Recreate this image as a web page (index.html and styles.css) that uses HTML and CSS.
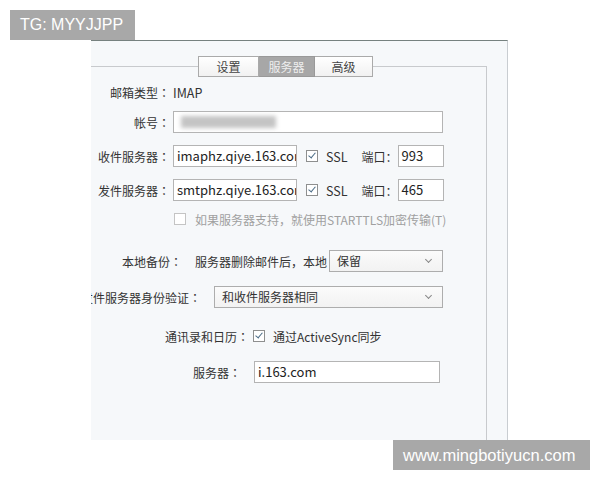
FILE: index.html
```html
<!DOCTYPE html>
<html lang="zh-CN">
<head>
    <meta charset="UTF-8">
    <title>服务器设置</title>
    <link rel="stylesheet" href="styles.css">
</head>
<body>
    <div class="mark mark-top">TG: MYYJJPP</div>

    <div class="panel">
        <div class="group">
            <div class="tabs">
                <div class="tab tab-1">设置</div>
                <div class="tab tab-2 active">服务器</div>
                <div class="tab tab-3">高级</div>
            </div>

            <div class="row r1">
                <div class="label w-a">邮箱类型<span class="p">：</span></div>
                <span class="plain">IMAP</span>
            </div>

            <div class="row r2">
                <div class="label w-a">帐号<span class="p">：</span></div>
                <div class="field f-account"><div class="blur"></div></div>
            </div>

            <div class="row r3">
                <div class="label w-a">收件服务器<span class="p">：</span></div>
                <div class="field f-host">imaphz.qiye.163.com</div>
                <span class="check on"></span>
                <span class="ssl">SSL</span>
                <span class="port-label">端口<span class="p">：</span></span>
                <div class="field f-port">993</div>
            </div>

            <div class="row r4">
                <div class="label w-a">发件服务器<span class="p">：</span></div>
                <div class="field f-host">smtphz.qiye.163.com</div>
                <span class="check on"></span>
                <span class="ssl">SSL</span>
                <span class="port-label">端口<span class="p">：</span></span>
                <div class="field f-port">465</div>
            </div>

            <div class="row r5">
                <span class="check off"></span>
                <span class="muted">如果服务器支持<span class="p">，</span>就使用STARTTLS加密传输(T)</span>
            </div>

            <div class="row r6">
                <div class="label w-b">本地备份<span class="p">：</span></div>
                <span class="note">服务器删除邮件后<span class="p">，</span>本地</span>
                <div class="select s-keep">保留<span class="chev"></span></div>
            </div>

            <div class="row r7">
                <div class="label w-c">发件服务器身份验证<span class="p">：</span></div>
                <div class="select s-auth">和收件服务器相同<span class="chev"></span></div>
            </div>

            <div class="row r8">
                <div class="label w-d">通讯录和日历<span class="p">：</span></div>
                <span class="check on"></span>
                <span class="sync">通过ActiveSync同步</span>
            </div>

            <div class="row r9">
                <div class="label w-e">服务器<span class="p">：</span></div>
                <div class="field f-sync">i.163.com</div>
            </div>
        </div>
    </div>

    <div class="mark mark-bottom">www.mingbotiyucn.com</div>
</body>
</html>
```

FILE: styles.css
```css
body {
    margin: 0;
    background: #fff;
    font-family: "Noto Sans CJK SC", "Noto Sans", sans-serif;
    font-size: 12px;
    color: #333;
    position: relative;
    width: 600px;
    height: 480px;
    overflow: hidden;
}

/* centred full-width punctuation, as the Windows UI font draws it */
.p {
    font-family: "Noto Sans CJK TC", sans-serif;
}

/* watermarks over the screenshot */
.mark {
    position: absolute;
    background: #a8a8a8;
    color: #fff;
    font-family: "Liberation Sans", Arial, sans-serif;
    font-size: 16px;
    line-height: 30px;
    padding: 0 10px;
}

.mark-top {
    left: 10px;
    top: 10px;
    width: 105px;
}

.mark-bottom {
    left: 393px;
    top: 440px;
    width: 177px;
    font-size: 16.5px;
}

.panel {
    margin: 40px 0 0 91px;
    width: 416px;
    height: 399px;
    border-top: 1px solid #76817f;
    border-right: 1px solid #c9cdd1;
    background: #f6f8fa;
    overflow: hidden;
}

.group {
    margin-top: 25px;
    width: 395px;
    height: 400px;
    border-top: 1px solid #c8cacd;
    border-right: 1px solid #c8cacd;
}

.tabs {
    display: flex;
    margin: -11px 0 0 107px;
}

.tab {
    height: 19px;
    line-height: 19px;
    border: 1px solid #aaa;
    background: linear-gradient(#fff, #f1f1f1);
    text-align: center;
    color: #444;
}

.tab + .tab {
    border-left: none;
}

.tab-1 { width: 59px; }
.tab-2 { width: 55px; }
.tab-3 { width: 57px; }

.tab.active {
    background: #a7a7a7;
    border-color: #999;
    color: #eee;
}

.row {
    display: flex;
    align-items: center;
    height: 22px;
    white-space: nowrap;
}

.r1 { margin-top: 4px; }
.r2 { margin-top: 8px; }
.r3 { margin-top: 12px; }
.r4 { margin-top: 12px; }
.r5 { margin-top: 7px; padding-left: 83px; }
.r6 { margin-top: 20px; }
.r7 { margin-top: 14px; }
.r8 { margin-top: 17px; }
.r9 { margin-top: 14px; }

.label {
    display: flex;
    justify-content: flex-end;
    flex: none;
    color: #333;
}

.w-a { width: 79px; margin-right: 3px; }
.w-b { width: 91px; margin-right: 13px; }
.w-c { width: 110px; margin-right: 13px; }
.w-d { width: 158px; margin-right: 4px; }
.w-e { width: 150px; margin-right: 13px; }

.plain {
    font-size: 12.5px;
    color: #333;
}

.field {
    box-sizing: border-box;
    height: 22px;
    border: 1px solid #b4b4b4;
    background: #fff;
    font-size: 13px;
    line-height: 20px;
    padding-left: 3px;
    overflow: hidden;
    color: #222;
}

.f-account { width: 270px; }
.f-host { width: 124px; }
.f-port { width: 46px; }
.f-sync { width: 186px; }

.blur {
    margin: 4px 0 0 4px;
    width: 95px;
    height: 12px;
    background: #c4c4c4;
    filter: blur(2px);
}

.check {
    box-sizing: border-box;
    width: 12px;
    height: 12px;
    border: 1px solid #8e8f8f;
    background: #fff;
    position: relative;
    flex: none;
}

.check.on::after {
    content: "";
    position: absolute;
    left: 3px;
    top: 0px;
    width: 3px;
    height: 6px;
    border: solid #4a6b86;
    border-width: 0 1.5px 1.5px 0;
    transform: rotate(40deg);
}

.check.off {
    border-color: #c4c4c4;
}

.r3 .check, .r4 .check { margin-left: 9px; }

.ssl {
    margin-left: 8px;
    font-size: 12.5px;
}

.port-label {
    margin-left: 14px;
    margin-right: 0;
}

.muted {
    margin-left: 9px;
    color: #a0a0a0;
}

.note {
    margin-right: 2px;
}

.select {
    box-sizing: border-box;
    height: 22px;
    border: 1px solid #adadad;
    background: linear-gradient(#fbfbfb, #f2f2f2);
    line-height: 20px;
    padding-left: 7px;
    position: relative;
    color: #333;
}

.s-keep { width: 114px; }
.s-auth { width: 229px; }

.chev {
    position: absolute;
    right: 11px;
    top: 6px;
    width: 4px;
    height: 4px;
    border: solid #888;
    border-width: 0 1px 1px 0;
    transform: rotate(45deg);
}

.sync {
    margin-left: 8px;
}
```
